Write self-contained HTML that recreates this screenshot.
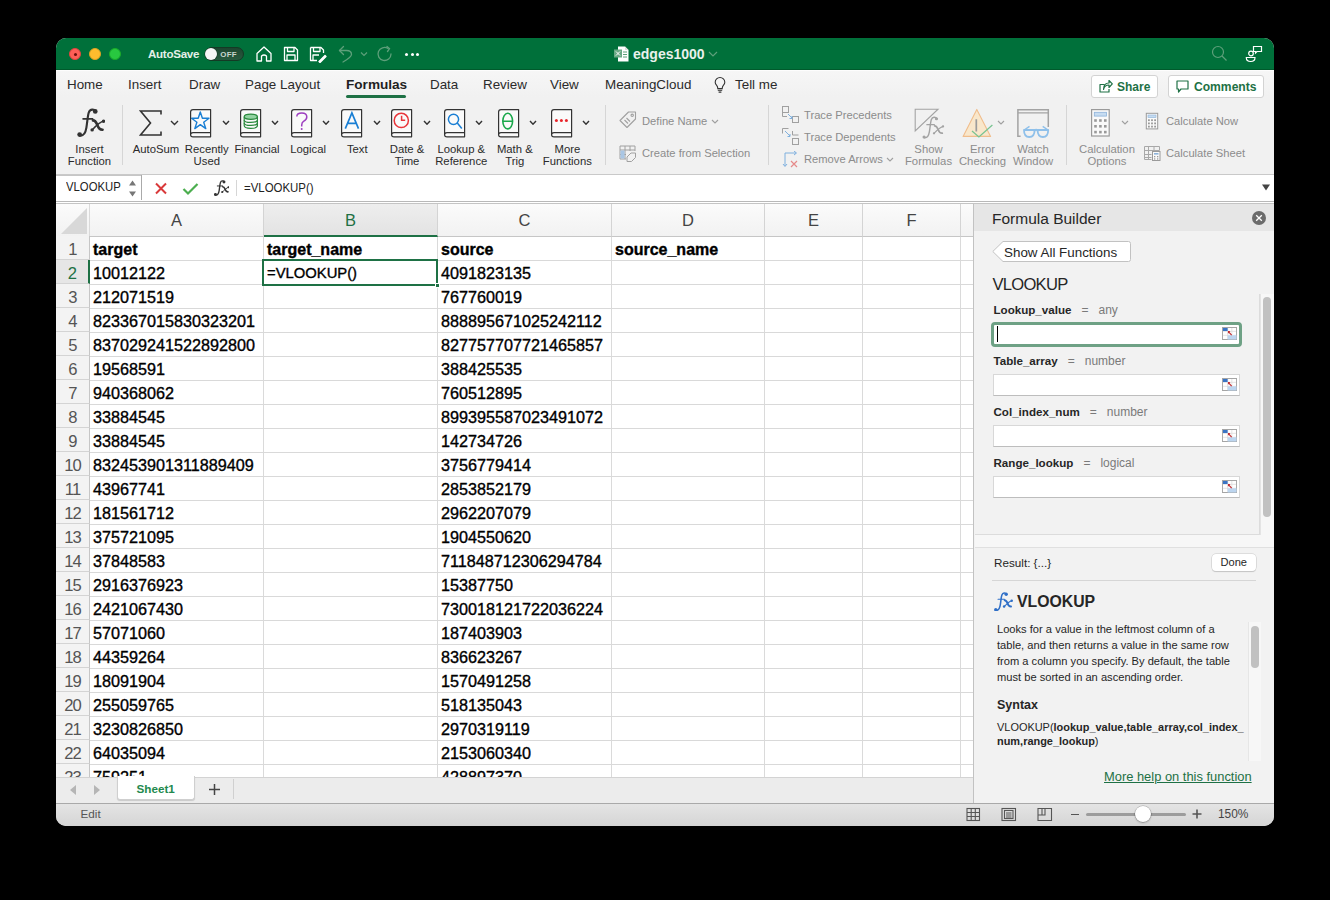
<!DOCTYPE html>
<html><head><meta charset="utf-8">
<style>
*{box-sizing:border-box;margin:0;padding:0}
html,body{width:1330px;height:900px;background:#000;overflow:hidden;font-family:"Liberation Sans",sans-serif}
#win{position:absolute;left:56px;top:38px;width:1218px;height:788px;border-radius:10px;overflow:hidden;background:#f1f1f1}
#in{position:absolute;left:-56px;top:-38px;width:1330px;height:900px}
#in div,#in svg,#in span.ab{position:absolute}
.t{white-space:nowrap;line-height:1}
/* title */
#title{left:56px;top:38px;width:1218px;height:32px;background:#00703a}
/* tabs */
.tab{top:78px;font-size:13.4px;color:#2b2b2b}
/* ribbon */
.lbl{font-size:11.3px;color:#2b2b2b;text-align:center;line-height:12.4px;white-space:nowrap}
.sm{font-size:11.2px;color:#8c8c8c;white-space:nowrap;line-height:1}
.sep{width:1px;background:#d6d6d6}
/* grid */
.vl{top:204px;width:1px;height:573px;background:#dadada}
.hl{left:56px;width:917px;height:1px;background:#d9d9d9}
.ch{top:204px;height:33px;font-size:16.5px;color:#444;text-align:center;line-height:33px;padding-left:0px;background:linear-gradient(#fbfbfb,#f2f2f2);border-right:1px solid #d4d4d4;border-bottom:1px solid #c6c6c6}
.ch.sel{background:linear-gradient(#eeeeee,#e3e3e3);color:#1e7145;border-bottom:2px solid #1e7145}
.rh{left:56px;width:34px;height:24px;font-size:16.6px;color:#555;text-align:center;line-height:28px;padding-left:0px;letter-spacing:-0.9px;background:#f3f3f3;border-bottom:1px solid #d4d4d4;border-right:1px solid #c6c6c6}
.rh.sel{background:#e6e6e6;color:#1e7145;border-right:2px solid #1e7145}
.c{font-size:16.2px;color:#000;line-height:27px;height:24px;white-space:nowrap;-webkit-text-stroke:0.35px #000}
.c.b{font-weight:bold;font-size:16px}
/* panel */
.pl{font-size:11.6px;font-weight:bold;color:#262626;line-height:1}
.pe{font-size:12px;color:#7a7a7a;line-height:1}
.inp{left:993px;width:247px;height:22px;background:#fff;border:1px solid #cfcfcf;border-radius:2px}
</style></head><body>
<div id="win"><div id="in">
<!-- TITLE BAR -->
<div id="title"></div>
<div style="left:56px;top:69px;width:1218px;height:1px;background:#005a2c"></div>
<div style="left:69px;top:48px;width:12px;height:12px;border-radius:50%;background:#fe5f57;border:0.5px solid #e0443e"></div>
<div style="left:73.5px;top:52.5px;width:3.5px;height:3.5px;border-radius:50%;background:#6e0f0b"></div>
<div style="left:89px;top:48px;width:12px;height:12px;border-radius:50%;background:#febc2e;border:0.5px solid #dea123"></div>
<div style="left:109px;top:48px;width:12px;height:12px;border-radius:50%;background:#28c840;border:0.5px solid #1aab29"></div>
<div class="t" style="left:148px;top:48px;font-size:11.6px;font-weight:bold;color:#e4efe8;letter-spacing:-0.3px">AutoSave</div>
<div style="left:204.5px;top:47px;width:39.5px;height:14px;border-radius:7px;background:linear-gradient(#1d4630,#285a3f);border:0.8px solid #143a25"></div>
<div style="left:204.8px;top:47.5px;width:12.6px;height:12.6px;border-radius:50%;background:#f6f6f6;box-shadow:0 0 0 0.6px #143a25"></div>
<div class="t" style="left:220.3px;top:50.8px;font-size:7.9px;font-weight:bold;color:#c9d6ce;letter-spacing:0.2px">OFF</div>
<!-- home -->
<svg style="left:255px;top:45px" width="18" height="18" viewBox="0 0 18 18" fill="none" stroke="#fff" stroke-width="1.3" stroke-linejoin="round"><path d="M2 8.5 L9 2 L16 8.5 V16 H11.5 V11 Q9 9 6.5 11 V16 H2 Z"/></svg>
<!-- save -->
<svg style="left:283px;top:46px" width="16" height="16" viewBox="0 0 16 16" fill="none" stroke="#fff" stroke-width="1.3" stroke-linejoin="round"><path d="M1.5 1.5 H12 L14.5 4 V14.5 H1.5 Z"/><path d="M4.5 1.5 V5.5 H11 V1.5"/><path d="M4 14.5 V9 H12 V14.5"/></svg>
<!-- save as -->
<svg style="left:309px;top:46px" width="18" height="17" viewBox="0 0 18 17" fill="none" stroke="#fff" stroke-width="1.3" stroke-linejoin="round"><path d="M1.5 1.5 H12 L14.5 4 V7 M8 14.5 H1.5 V1.5"/><path d="M4.5 1.5 V5.5 H11 V1.5"/><path d="M4 14.5 V9 H10"/><path d="M10 15.5 L16 9.5 L17 10.5 L11 16.5 Z" fill="#fff"/></svg>
<!-- undo -->
<svg style="left:338px;top:45px" width="16" height="18" viewBox="0 0 16 18" fill="none" stroke="#5d9f7a" stroke-width="1.3" stroke-linecap="round" stroke-linejoin="round"><path d="M5.5 1.5 L1.5 5.5 L5.5 9.5"/><path d="M1.5 5.5 H8.5 Q13.5 5.5 13.5 9.5 Q13.5 12 5 17"/></svg>
<svg style="left:360px;top:51px" width="8" height="6" viewBox="0 0 8 6" fill="none" stroke="#5d9f7a" stroke-width="1.2"><path d="M1 1.5 L4 4.5 L7 1.5"/></svg>
<!-- redo -->
<svg style="left:376px;top:45px" width="18" height="18" viewBox="0 0 18 18" fill="none" stroke="#5d9f7a" stroke-width="1.3" stroke-linecap="round"><path d="M15 9 A6.5 6.5 0 1 1 12 3.5"/><path d="M11 1.5 L13.5 3.7 L11.5 6.5"/></svg>
<!-- more -->
<div style="left:405px;top:53px;width:3px;height:3px;border-radius:50%;background:#fff"></div>
<div style="left:410.5px;top:53px;width:3px;height:3px;border-radius:50%;background:#fff"></div>
<div style="left:416px;top:53px;width:3px;height:3px;border-radius:50%;background:#fff"></div>
<!-- doc title -->
<svg style="left:614px;top:46px" width="15" height="16" viewBox="0 0 15 16"><path d="M4 0.5 H11 L14.5 4 V15.5 H4 Z" fill="#fff"/><path d="M11 0.5 V4 H14.5" fill="#ddd"/><rect x="0" y="3.5" width="8" height="8" fill="#6aa985"/><path d="M2 5.5 L6 9.5 M6 5.5 L2 9.5" stroke="#fff" stroke-width="1"/><path d="M9 6 H13 M9 8.5 H13 M9 11 H13" stroke="#5da07a" stroke-width="1"/></svg>
<div class="t" style="left:633px;top:47px;font-size:14px;font-weight:bold;color:#e9f1ec">edges1000</div>
<svg style="left:708px;top:51px" width="10" height="6" viewBox="0 0 10 6" fill="none" stroke="#5d9f7a" stroke-width="1.2"><path d="M1 1 L5 5 L9 1"/></svg>
<!-- search -->
<svg style="left:1211px;top:45px" width="17" height="17" viewBox="0 0 17 17" fill="none" stroke="#5d9f7a" stroke-width="1.2"><circle cx="7" cy="7" r="5.5"/><path d="M11 11 L15.5 15.5"/></svg>
<!-- collab -->
<svg style="left:1245px;top:45px" width="18" height="18" viewBox="0 0 18 18" fill="none" stroke="#fff" stroke-width="1.2"><circle cx="6" cy="8.5" r="2.3"/><path d="M1.3 12.5 H10 Q10 16.5 5.7 16.5 Q1.3 16.5 1.3 12.5 Z"/><path d="M8.5 1.5 H16.5 V6.5 H12 L10.5 8 V6.5 H8.5 Z"/></svg>

<!-- TABS -->
<div style="left:56px;top:71px;width:1218px;height:26px;background:linear-gradient(#f6f6f6,#f1f1f1)"></div>
<div style="left:56px;top:70px;width:1218px;height:1px;background:#fdfdfd"></div>
<div class="t tab" style="left:67px">Home</div>
<div class="t tab" style="left:128px">Insert</div>
<div class="t tab" style="left:189px">Draw</div>
<div class="t tab" style="left:245px">Page Layout</div>
<div class="t tab" style="left:346px;font-weight:bold;font-size:13.6px;color:#1f1f1f">Formulas</div>
<div style="left:346px;top:95px;width:60px;height:3px;border-radius:1.5px;background:#1e7145"></div>
<div class="t tab" style="left:430px">Data</div>
<div class="t tab" style="left:483px">Review</div>
<div class="t tab" style="left:550px">View</div>
<div class="t tab" style="left:605px">MeaningCloud</div>
<svg style="left:713px;top:76px" width="14" height="18" viewBox="713 75 14 18" fill="none" stroke="#333" stroke-width="1.1"><path d="M717.8 87.6 Q717.8 85.6 716.5 84.2 Q715.2 82.8 715.2 81.3 A4.8 4.8 0 0 1 724.8 81.3 Q724.8 82.8 723.5 84.2 Q722.2 85.6 722.2 87.6 Z"/><path d="M717.8 89.3 H722.2" stroke-width="1"/><path d="M718.6 91.1 H721.4" stroke-width="1.2"/></svg>
<div class="t tab" style="left:735px">Tell me</div>
<!-- share/comments -->
<div style="left:1091px;top:74.5px;width:67px;height:23.5px;background:#fff;border:1px solid #d3d3d3;border-radius:3px"></div>
<svg style="left:1099px;top:80px" width="14" height="13" viewBox="0 0 14 13" fill="none" stroke="#1e7145" stroke-width="1.2" stroke-linejoin="round"><path d="M5.5 4.5 H1 V12 H10 V9"/><path d="M4.5 9.5 Q5.5 5 10 5 V7.5 L13.3 3.8 L10 0.5 V3 Q4.5 3 4.5 9.5 Z"/></svg>
<div class="t" style="left:1117px;top:80.5px;font-size:12px;font-weight:bold;color:#1e7145">Share</div>
<div style="left:1168px;top:74.5px;width:96px;height:23.5px;background:#fff;border:1px solid #d3d3d3;border-radius:3px"></div>
<svg style="left:1176px;top:80px" width="13" height="14" viewBox="0 0 13 14" fill="none" stroke="#1e7145" stroke-width="1.2" stroke-linejoin="round"><path d="M1 1 H12 V9 H5 L2.5 12 V9 H1 Z"/></svg>
<div class="t" style="left:1194px;top:80.5px;font-size:12.1px;font-weight:bold;color:#1e7145">Comments</div>

<!-- RIBBON -->
<div style="left:56px;top:174px;width:1218px;height:1px;background:#c9c9c9"></div>
<!-- Insert function -->
<svg style="left:76.52px;top:107.92px" width="28.62" height="29.17" viewBox="290 180 520 530" fill="none" stroke="#333" stroke-linecap="round"><path d="M630 240 C600 195, 530 195, 505 260 C485 310, 480 420, 460 540 C445 630, 420 690, 345 680" stroke-width="39.0"/><circle cx="622" cy="243" r="42.9" fill="#333" stroke="none"/><circle cx="338" cy="662" r="42.9" fill="#333" stroke="none"/><path d="M400 378 H575" stroke-width="28.6"/><path d="M580 405 C625 405, 640 440, 660 490 C680 545, 700 580, 755 575" stroke-width="46.800000000000004"/><path d="M780 418 C720 430, 625 515, 565 580" stroke-width="28.6"/><circle cx="772" cy="420" r="31.200000000000003" fill="#333" stroke="none"/><circle cx="565" cy="578" r="31.200000000000003" fill="#333" stroke="none"/></svg>
<div class="lbl" style="left:59px;top:143px;width:61px">Insert<br>Function</div>
<div class="sep" style="left:122px;top:105px;height:60px"></div>
<!-- AutoSum -->
<svg style="left:139px;top:110px" width="23" height="26" viewBox="0 0 23 26" fill="none" stroke="#333" stroke-width="1.6"><path d="M22 4.5 V1 H1.5 L11.5 13 L1.5 25 H22 V21.5"/></svg>
<svg class="chev" style="left:170px;top:120px" width="9" height="6" viewBox="0 0 9 6" fill="none" stroke="#333" stroke-width="1.4"><path d="M1 1 L4.5 4.5 L8 1"/></svg>
<div class="lbl" style="left:126px;top:143px;width:60px">AutoSum</div>
<svg style="left:189.2px;top:108px" width="23" height="30" viewBox="-1 -1 23 30"><path d="M0.6 3 Q0.6 0.6 3 0.6 H20.6 V27.8 H3 Q0.6 27.8 0.6 25.7 Z" fill="#fafafa"/><path d="M0.6 25.7 Q0.6 23.6 3 23.6 H20.6" fill="#fff"/><path d="M10.3 3 L12.4 9.3 H19 L13.7 13.2 L15.8 19.6 L10.3 15.6 L4.8 19.6 L6.9 13.2 L1.6 9.3 H8.2 Z" fill="none" stroke="#1a7fd4" stroke-width="1.4" stroke-linejoin="round"/><path d="M0.6 3 Q0.6 0.6 3 0.6 H20.6 V27.8 H3 Q0.6 27.8 0.6 25.7 Z M0.6 25.7 Q0.6 23.6 3 23.6 H20.6" fill="none" stroke="#333" stroke-width="1.2" stroke-linejoin="round"/></svg>
<svg style="left:221.5px;top:120px" width="8" height="6" viewBox="0 0 8 6" fill="none" stroke="#333" stroke-width="1.4"><path d="M1 1 L4 4.3 L7 1"/></svg>
<div class="lbl" style="left:166.8px;top:143px;width:80px">Recently<br>Used</div>
<svg style="left:239.2px;top:108px" width="23" height="30" viewBox="-1 -1 23 30"><path d="M0.6 3 Q0.6 0.6 3 0.6 H20.6 V27.8 H3 Q0.6 27.8 0.6 25.7 Z" fill="#fafafa"/><path d="M0.6 25.7 Q0.6 23.6 3 23.6 H20.6" fill="#fff"/><g stroke="#2b8a3e" stroke-width="1.2"><ellipse cx="10.8" cy="7.7" rx="6.6" ry="2.6" fill="#93d3a2"/><path d="M4.2 7.7 V16.6 Q4.2 19.4 10.8 19.4 Q17.4 19.4 17.4 16.6 V7.7" fill="none"/><path d="M4.2 10.9 Q4.2 13.4 10.8 13.4 Q17.4 13.4 17.4 10.9 M4.2 13.9 Q4.2 16.4 10.8 16.4 Q17.4 16.4 17.4 13.9" fill="none"/></g><path d="M0.6 3 Q0.6 0.6 3 0.6 H20.6 V27.8 H3 Q0.6 27.8 0.6 25.7 Z M0.6 25.7 Q0.6 23.6 3 23.6 H20.6" fill="none" stroke="#333" stroke-width="1.2" stroke-linejoin="round"/></svg>
<svg style="left:270.5px;top:120px" width="8" height="6" viewBox="0 0 8 6" fill="none" stroke="#333" stroke-width="1.4"><path d="M1 1 L4 4.3 L7 1"/></svg>
<div class="lbl" style="left:217.0px;top:143px;width:80px">Financial</div>
<svg style="left:289.6px;top:108px" width="23" height="30" viewBox="-1 -1 23 30"><path d="M0.6 3 Q0.6 0.6 3 0.6 H20.6 V27.8 H3 Q0.6 27.8 0.6 25.7 Z" fill="#fafafa"/><path d="M0.6 25.7 Q0.6 23.6 3 23.6 H20.6" fill="#fff"/><path d="M5.8 7.5 Q5.8 4 10.8 4 Q15.8 4 15.8 8 Q15.8 10.5 12.5 12.3 Q10.7 13.3 10.7 16.3 V17.5" fill="none" stroke="#9d3fc0" stroke-width="1.5"/><circle cx="10.7" cy="20" r="1" fill="#9d3fc0"/><path d="M0.6 3 Q0.6 0.6 3 0.6 H20.6 V27.8 H3 Q0.6 27.8 0.6 25.7 Z M0.6 25.7 Q0.6 23.6 3 23.6 H20.6" fill="none" stroke="#333" stroke-width="1.2" stroke-linejoin="round"/></svg>
<svg style="left:321.5px;top:120px" width="8" height="6" viewBox="0 0 8 6" fill="none" stroke="#333" stroke-width="1.4"><path d="M1 1 L4 4.3 L7 1"/></svg>
<div class="lbl" style="left:268.1px;top:143px;width:80px">Logical</div>
<svg style="left:340px;top:108px" width="23" height="30" viewBox="-1 -1 23 30"><path d="M0.6 3 Q0.6 0.6 3 0.6 H20.6 V27.8 H3 Q0.6 27.8 0.6 25.7 Z" fill="#fafafa"/><path d="M0.6 25.7 Q0.6 23.6 3 23.6 H20.6" fill="#fff"/><path d="M4.3 19.7 L10.9 4 L17.5 19.7 M6.6 14.3 H15.2" fill="none" stroke="#1a7fd4" stroke-width="1.7"/><path d="M0.6 3 Q0.6 0.6 3 0.6 H20.6 V27.8 H3 Q0.6 27.8 0.6 25.7 Z M0.6 25.7 Q0.6 23.6 3 23.6 H20.6" fill="none" stroke="#333" stroke-width="1.2" stroke-linejoin="round"/></svg>
<svg style="left:372.5px;top:120px" width="8" height="6" viewBox="0 0 8 6" fill="none" stroke="#333" stroke-width="1.4"><path d="M1 1 L4 4.3 L7 1"/></svg>
<div class="lbl" style="left:317.3px;top:143px;width:80px">Text</div>
<svg style="left:390.3px;top:108px" width="23" height="30" viewBox="-1 -1 23 30"><path d="M0.6 3 Q0.6 0.6 3 0.6 H20.6 V27.8 H3 Q0.6 27.8 0.6 25.7 Z" fill="#fafafa"/><path d="M0.6 25.7 Q0.6 23.6 3 23.6 H20.6" fill="#fff"/><circle cx="10.3" cy="11.4" r="7.1" fill="none" stroke="#e8363b" stroke-width="1.5"/><path d="M10.6 6.8 V11.3 H14.2" fill="none" stroke="#e8363b" stroke-width="1.5"/><path d="M0.6 3 Q0.6 0.6 3 0.6 H20.6 V27.8 H3 Q0.6 27.8 0.6 25.7 Z M0.6 25.7 Q0.6 23.6 3 23.6 H20.6" fill="none" stroke="#333" stroke-width="1.2" stroke-linejoin="round"/></svg>
<svg style="left:422.5px;top:120px" width="8" height="6" viewBox="0 0 8 6" fill="none" stroke="#333" stroke-width="1.4"><path d="M1 1 L4 4.3 L7 1"/></svg>
<div class="lbl" style="left:367.05px;top:143px;width:80px">Date &amp;<br>Time</div>
<svg style="left:443.2px;top:108px" width="23" height="30" viewBox="-1 -1 23 30"><path d="M0.6 3 Q0.6 0.6 3 0.6 H20.6 V27.8 H3 Q0.6 27.8 0.6 25.7 Z" fill="#fafafa"/><path d="M0.6 25.7 Q0.6 23.6 3 23.6 H20.6" fill="#fff"/><circle cx="9.5" cy="10.3" r="5.1" fill="none" stroke="#1a7fd4" stroke-width="1.5"/><path d="M13.3 14.1 L17.8 19.4" stroke="#1a7fd4" stroke-width="1.6"/><path d="M0.6 3 Q0.6 0.6 3 0.6 H20.6 V27.8 H3 Q0.6 27.8 0.6 25.7 Z M0.6 25.7 Q0.6 23.6 3 23.6 H20.6" fill="none" stroke="#333" stroke-width="1.2" stroke-linejoin="round"/></svg>
<svg style="left:475.0px;top:120px" width="8" height="6" viewBox="0 0 8 6" fill="none" stroke="#333" stroke-width="1.4"><path d="M1 1 L4 4.3 L7 1"/></svg>
<div class="lbl" style="left:421.25px;top:143px;width:80px">Lookup &amp;<br>Reference</div>
<svg style="left:497.4px;top:108px" width="23" height="30" viewBox="-1 -1 23 30"><path d="M0.6 3 Q0.6 0.6 3 0.6 H20.6 V27.8 H3 Q0.6 27.8 0.6 25.7 Z" fill="#fafafa"/><path d="M0.6 25.7 Q0.6 23.6 3 23.6 H20.6" fill="#fff"/><ellipse cx="9.7" cy="12.1" rx="4.9" ry="7.8" fill="none" stroke="#1aa84b" stroke-width="1.6"/><path d="M4.7 12.2 H14.7" stroke="#1aa84b" stroke-width="1.6"/><path d="M0.6 3 Q0.6 0.6 3 0.6 H20.6 V27.8 H3 Q0.6 27.8 0.6 25.7 Z M0.6 25.7 Q0.6 23.6 3 23.6 H20.6" fill="none" stroke="#333" stroke-width="1.2" stroke-linejoin="round"/></svg>
<svg style="left:529.1px;top:120px" width="8" height="6" viewBox="0 0 8 6" fill="none" stroke="#333" stroke-width="1.4"><path d="M1 1 L4 4.3 L7 1"/></svg>
<div class="lbl" style="left:474.79999999999995px;top:143px;width:80px">Math &amp;<br>Trig</div>
<svg style="left:550.2px;top:108px" width="23" height="30" viewBox="-1 -1 23 30"><path d="M0.6 3 Q0.6 0.6 3 0.6 H20.6 V27.8 H3 Q0.6 27.8 0.6 25.7 Z" fill="#fafafa"/><path d="M0.6 25.7 Q0.6 23.6 3 23.6 H20.6" fill="#fff"/><g fill="#e8262c"><circle cx="5.4" cy="11.4" r="1.5"/><circle cx="10.4" cy="11.4" r="1.5"/><circle cx="15.4" cy="11.4" r="1.5"/></g><path d="M0.6 3 Q0.6 0.6 3 0.6 H20.6 V27.8 H3 Q0.6 27.8 0.6 25.7 Z M0.6 25.7 Q0.6 23.6 3 23.6 H20.6" fill="none" stroke="#333" stroke-width="1.2" stroke-linejoin="round"/></svg>
<svg style="left:582.1px;top:120px" width="8" height="6" viewBox="0 0 8 6" fill="none" stroke="#333" stroke-width="1.4"><path d="M1 1 L4 4.3 L7 1"/></svg>
<div class="lbl" style="left:527.35px;top:143px;width:80px">More<br>Functions</div>
<div class="sep" style="left:605px;top:105px;height:60px"></div>
<!-- Define name -->
<svg style="left:619px;top:111px" width="18" height="18" viewBox="0 0 18 18" fill="none" stroke="#a0a0a0" stroke-width="1.1" stroke-linejoin="round"><path d="M1 9.5 L9.5 1 H16.5 V8 L8 16.5 Z"/><circle cx="13.2" cy="4.3" r="1.2"/><path d="M5.5 9 L9 12.5 M7.5 7 L11 10.5"/></svg>
<div class="sm" style="left:642px;top:116px">Define Name</div>
<svg style="left:711px;top:119px" width="8" height="5" viewBox="0 0 8 5" fill="none" stroke="#a0a0a0" stroke-width="1.1"><path d="M1 1 L4 4 L7 1"/></svg>
<svg style="left:619px;top:145px" width="18" height="17" viewBox="0 0 18 17" fill="none" stroke="#a0a0a0" stroke-width="1"><path d="M1 1 H16 V6 M1 1 V14 H7 M1 5 H16 M1 9.5 H7 M6 1 V14 M11 1 V6"/><rect x="1.5" y="5.5" width="4" height="8" fill="#a9c6e4" stroke="none"/><path d="M8 12 L12 8 H16.5 V12.5 L12.5 16.5 H8 Z" fill="#f1f1f1"/></svg>
<div class="sm" style="left:642px;top:148px">Create from Selection</div>
<div class="sep" style="left:768px;top:105px;height:60px"></div>
<!-- trace -->
<svg style="left:782px;top:106px" width="17" height="17" viewBox="0 0 17 17" fill="none" stroke="#a0a0a0" stroke-width="1"><rect x="0.5" y="0.5" width="6" height="6"/><path d="M0.5 6.5 V10.5 H5"/><rect x="10.5" y="10.5" width="6" height="6"/><path d="M6 8 L10 12" stroke="#7fb0de"/><path d="M7.5 12.5 H10 V10" stroke="#7fb0de"/></svg>
<div class="sm" style="left:804px;top:110px">Trace Precedents</div>
<svg style="left:782px;top:128px" width="17" height="17" viewBox="0 0 17 17" fill="none" stroke="#a0a0a0" stroke-width="1"><path d="M0.5 5.5 V0.5 H6.5"/><rect x="10.5" y="10.5" width="6" height="6"/><path d="M10.5 3 V7 H16.5"/><path d="M3 3 L8 8" stroke="#7fb0de"/><path d="M5.5 8.5 H8 V6" stroke="#7fb0de"/></svg>
<div class="sm" style="left:804px;top:132px">Trace Dependents</div>
<svg style="left:782px;top:151px" width="17" height="17" viewBox="0 0 17 17" fill="none" stroke-width="1"><path d="M3 15 V2 H14" stroke="#7fb0de"/><path d="M1 13 L3 15.5 L5 13 M12 0 L14.5 2 L12 4" stroke="#7fb0de"/><path d="M9 10 L15 16 M15 10 L9 16" stroke="#e58a8a" stroke-width="1.2"/></svg>
<div class="sm" style="left:804px;top:154px">Remove Arrows</div>
<svg style="left:886px;top:157px" width="8" height="5" viewBox="0 0 8 5" fill="none" stroke="#a0a0a0" stroke-width="1.1"><path d="M1 1 L4 4 L7 1"/></svg>
<!-- show formulas -->
<svg style="left:914px;top:108px" width="26" height="25" viewBox="0 0 26 25" fill="none" stroke="#a3a3a3" stroke-width="1.1"><path d="M1.2 23 V1.2 H24 Z"/></svg><svg style="left:922.30px;top:115.54px" width="22.68" height="23.11" viewBox="290 180 520 530" fill="none" stroke="#a3a3a3" stroke-linecap="round"><path d="M630 240 C600 195, 530 195, 505 260 C485 310, 480 420, 460 540 C445 630, 420 690, 345 680" stroke-width="33.0"/><circle cx="622" cy="243" r="36.300000000000004" fill="#a3a3a3" stroke="none"/><circle cx="338" cy="662" r="36.300000000000004" fill="#a3a3a3" stroke="none"/><path d="M400 378 H575" stroke-width="24.200000000000003"/><path d="M580 405 C625 405, 640 440, 660 490 C680 545, 700 580, 755 575" stroke-width="39.6"/><path d="M780 418 C720 430, 625 515, 565 580" stroke-width="24.200000000000003"/><circle cx="772" cy="420" r="26.400000000000002" fill="#a3a3a3" stroke="none"/><circle cx="565" cy="578" r="26.400000000000002" fill="#a3a3a3" stroke="none"/></svg>
<div class="lbl" style="left:900px;top:143px;width:57px;color:#8c8c8c">Show<br>Formulas</div>
<!-- error checking -->
<svg style="left:960px;top:107px" width="36" height="33" viewBox="960 107 36 33"><path d="M976.8 109.4 L990.6 136.4 H963.1 Z" fill="#f9e7cb" stroke="#f0bd8c" stroke-width="1.1" stroke-linejoin="round"/><path d="M976.3 119.2 V131.5" stroke="#9c9c9c" stroke-width="1.7"/><path d="M972 131 L978.9 137 L992.4 124.9" fill="none" stroke="#79c492" stroke-width="1.3"/></svg>
<svg style="left:997px;top:120px" width="8" height="5" viewBox="0 0 8 5" fill="none" stroke="#a0a0a0" stroke-width="1.1"><path d="M1 1 L4 4 L7 1"/></svg>
<div class="lbl" style="left:955px;top:143px;width:55px;color:#8c8c8c">Error<br>Checking</div>
<!-- watch window -->
<svg style="left:1016px;top:107px" width="36" height="33" viewBox="1016 107 36 33" fill="none"><path d="M1017.9 137 V109.8 H1048.3 V127" stroke="#a3a3a3" stroke-width="1.5"/><path d="M1017.9 112.9 H1048.3" stroke="#a3a3a3" stroke-width="1.1"/><path d="M1017.9 136.3 H1020.6" stroke="#a3a3a3" stroke-width="1.4"/><g stroke="#8fc0ea" stroke-width="1.8" stroke-linejoin="round"><path d="M1024 130 H1034.6 Q1034.6 137 1029.3 137 Q1024 137 1024 130 Z"/><path d="M1037.6 130 H1048.2 Q1048.2 137 1042.9 137 Q1037.6 137 1037.6 130 Z"/><path d="M1034.6 130.5 Q1036.1 129 1037.6 130.5"/><path d="M1024.2 130 L1029.5 126.3 M1048 130 L1042.7 126.3" stroke-width="1.5"/></g></svg>
<div class="lbl" style="left:1008px;top:143px;width:50px;color:#8c8c8c">Watch<br>Window</div>
<div class="sep" style="left:1066px;top:105px;height:60px"></div>
<!-- calc options -->
<svg style="left:1090px;top:108px" width="21" height="30" viewBox="1090 108 21 30"><rect x="1091.6" y="109.6" width="17.6" height="26.4" fill="#fafafa" stroke="#9a9a9a" stroke-width="1.2"/><rect x="1094.3" y="112.3" width="12.2" height="3.8" fill="#c6dcf1" stroke="#8db3da" stroke-width="0.8"/><g fill="#999"><rect x="1094.2" y="119.2" width="2.6" height="2.6"/><rect x="1099.1" y="119.2" width="2.6" height="2.6"/><rect x="1104" y="119.2" width="2.6" height="2.6"/><rect x="1094.2" y="125" width="2.6" height="2.6"/><rect x="1099.1" y="125" width="2.6" height="2.6"/><rect x="1104" y="125" width="2.6" height="2.6"/><rect x="1094.2" y="130.8" width="2.6" height="2.6"/><rect x="1099.1" y="130.8" width="2.6" height="2.6"/><rect x="1104" y="130.8" width="2.6" height="2.6"/></g></svg>
<svg style="left:1121px;top:120px" width="8" height="5" viewBox="0 0 8 5" fill="none" stroke="#a0a0a0" stroke-width="1.1"><path d="M1 1 L4 4 L7 1"/></svg>
<div class="lbl" style="left:1075px;top:143px;width:64px;color:#8c8c8c">Calculation<br>Options</div>
<svg style="left:1145px;top:112px" width="14" height="18" viewBox="1145 112 14 18"><rect x="1146.3" y="113.3" width="11.4" height="15.6" fill="#fafafa" stroke="#9a9a9a" stroke-width="1"/><rect x="1148" y="115" width="8" height="2.6" fill="#c6dcf1" stroke="#8db3da" stroke-width="0.6"/><g fill="#999"><rect x="1148" y="119.3" width="1.8" height="1.8"/><rect x="1151.1" y="119.3" width="1.8" height="1.8"/><rect x="1154.2" y="119.3" width="1.8" height="1.8"/><rect x="1148" y="122.5" width="1.8" height="1.8"/><rect x="1151.1" y="122.5" width="1.8" height="1.8"/><rect x="1154.2" y="122.5" width="1.8" height="1.8"/><rect x="1148" y="125.7" width="1.8" height="1.8"/><rect x="1151.1" y="125.7" width="1.8" height="1.8"/><rect x="1154.2" y="125.7" width="1.8" height="1.8"/></g></svg>
<div class="sm" style="left:1166px;top:116px">Calculate Now</div>
<svg style="left:1143px;top:145px" width="18" height="17" viewBox="1143 145 18 17" fill="none"><path d="M1144.5 146.5 H1159.5 V150.5 M1144.5 146.5 V159.5 H1151.5 M1144.5 150.5 H1159.5 M1144.5 154.5 H1151.5 M1144.5 157.5 H1151.5 M1148.5 146.5 V159.5 M1154 146.5 V150.5" stroke="#a8a8a8" stroke-width="1"/><rect x="1152.5" y="151.5" width="7.5" height="9" fill="#fafafa" stroke="#9a9a9a" stroke-width="1"/><rect x="1154" y="153" width="4.5" height="1.6" fill="#8db3da"/><g fill="#9a9a9a"><rect x="1154" y="156" width="1.3" height="1.3"/><rect x="1157" y="156" width="1.3" height="1.3"/><rect x="1154" y="158.3" width="1.3" height="1.3"/><rect x="1157" y="158.3" width="1.3" height="1.3"/></g></svg>
<div class="sm" style="left:1166px;top:148px">Calculate Sheet</div>

<!-- FORMULA BAR -->
<div style="left:56px;top:175px;width:1218px;height:27px;background:#fff"></div>
<div style="left:56px;top:175px;width:86px;height:1px;background:#c6c6c6"></div>
<div style="left:140.5px;top:175px;width:1.5px;height:25px;background:#aaaaaa"></div>
<div style="left:56px;top:201px;width:1218px;height:1px;background:#b8b8b8"></div>
<div style="left:56px;top:202px;width:1218px;height:1px;background:#fff"></div>
<div style="left:56px;top:203px;width:1218px;height:1px;background:#c4c4c4"></div>
<div class="t" style="left:66px;top:180px;font-size:13px;color:#222;transform:scaleX(0.87);transform-origin:0 0">VLOOKUP</div>
<svg style="left:128px;top:179px" width="9" height="19" viewBox="0 0 9 19" fill="#777"><path d="M4.5 1.5 L8 6.5 H1 Z M4.5 17.5 L8 12.5 H1 Z"/></svg>
<svg style="left:154px;top:182px" width="14" height="13" viewBox="0 0 14 13" fill="none" stroke="#d9393a" stroke-width="2"><path d="M2 1.5 L12 11.5 M12 1.5 L2 11.5"/></svg>
<svg style="left:182px;top:182px" width="17" height="14" viewBox="0 0 17 14" fill="none" stroke="#4cae4f" stroke-width="2.2"><path d="M1.5 7 L6 11.5 L15.5 2"/></svg>
<svg style="left:213.72px;top:180.41px" width="15.64" height="15.94" viewBox="290 180 520 530" fill="none" stroke="#333" stroke-linecap="round"><path d="M630 240 C600 195, 530 195, 505 260 C485 310, 480 420, 460 540 C445 630, 420 690, 345 680" stroke-width="45.0"/><circle cx="622" cy="243" r="49.5" fill="#333" stroke="none"/><circle cx="338" cy="662" r="49.5" fill="#333" stroke="none"/><path d="M400 378 H575" stroke-width="33.0"/><path d="M580 405 C625 405, 640 440, 660 490 C680 545, 700 580, 755 575" stroke-width="54.0"/><path d="M780 418 C720 430, 625 515, 565 580" stroke-width="33.0"/><circle cx="772" cy="420" r="36.0" fill="#333" stroke="none"/><circle cx="565" cy="578" r="36.0" fill="#333" stroke="none"/></svg>
<div style="left:236px;top:180px;width:1px;height:16px;background:#d6d6d6"></div>
<div class="t" style="left:244px;top:181.5px;font-size:12.5px;color:#222;transform:scaleX(0.915);transform-origin:0 0">=VLOOKUP()</div>
<svg style="left:1261px;top:183px" width="10" height="8" viewBox="0 0 10 8" fill="#444"><path d="M1 1.5 H9 L5 7.5 Z"/></svg>

<!-- GRID -->
<div style="left:56px;top:204px;width:917px;height:573px;background:#fff"></div>
<div style="left:56px;top:204px;width:34px;height:33px;background:linear-gradient(#fbfbfb,#f2f2f2);border-right:1px solid #c6c6c6;border-bottom:1px solid #c6c6c6"></div>
<svg style="left:61px;top:208px" width="26" height="26" viewBox="0 0 26 26"><path d="M26 0 V26 H0 Z" fill="#d8d8d8"/></svg>
<div class="vl" style="left:89px"></div>
<div class="vl" style="left:263px"></div>
<div class="vl" style="left:437px"></div>
<div class="vl" style="left:611px"></div>
<div class="vl" style="left:764px"></div>
<div class="vl" style="left:862px"></div>
<div class="vl" style="left:960px"></div>
<div class="hl" style="top:260px"></div>
<div class="hl" style="top:284px"></div>
<div class="hl" style="top:308px"></div>
<div class="hl" style="top:332px"></div>
<div class="hl" style="top:356px"></div>
<div class="hl" style="top:380px"></div>
<div class="hl" style="top:404px"></div>
<div class="hl" style="top:428px"></div>
<div class="hl" style="top:452px"></div>
<div class="hl" style="top:476px"></div>
<div class="hl" style="top:500px"></div>
<div class="hl" style="top:524px"></div>
<div class="hl" style="top:548px"></div>
<div class="hl" style="top:572px"></div>
<div class="hl" style="top:596px"></div>
<div class="hl" style="top:620px"></div>
<div class="hl" style="top:644px"></div>
<div class="hl" style="top:668px"></div>
<div class="hl" style="top:692px"></div>
<div class="hl" style="top:716px"></div>
<div class="hl" style="top:740px"></div>
<div class="hl" style="top:764px"></div>
<div class="hl" style="top:788px"></div>
<div class="ch" style="left:90px;width:174px">A</div>
<div class="ch sel" style="left:264px;width:174px">B</div>
<div class="ch" style="left:438px;width:174px">C</div>
<div class="ch" style="left:612px;width:153px">D</div>
<div class="ch" style="left:765px;width:98px">E</div>
<div class="ch" style="left:863px;width:98px">F</div>
<div class="ch" style="left:961px;width:98px">G</div>
<div class="rh" style="top:236px">1</div>
<div class="rh sel" style="top:260px">2</div>
<div class="rh" style="top:284px">3</div>
<div class="rh" style="top:308px">4</div>
<div class="rh" style="top:332px">5</div>
<div class="rh" style="top:356px">6</div>
<div class="rh" style="top:380px">7</div>
<div class="rh" style="top:404px">8</div>
<div class="rh" style="top:428px">9</div>
<div class="rh" style="top:452px">10</div>
<div class="rh" style="top:476px">11</div>
<div class="rh" style="top:500px">12</div>
<div class="rh" style="top:524px">13</div>
<div class="rh" style="top:548px">14</div>
<div class="rh" style="top:572px">15</div>
<div class="rh" style="top:596px">16</div>
<div class="rh" style="top:620px">17</div>
<div class="rh" style="top:644px">18</div>
<div class="rh" style="top:668px">19</div>
<div class="rh" style="top:692px">20</div>
<div class="rh" style="top:716px">21</div>
<div class="rh" style="top:740px">22</div>
<div class="rh" style="top:764px">23</div>
<div class="c b" style="left:93px;top:236px">target</div>
<div class="c b" style="left:267px;top:236px">target_name</div>
<div class="c b" style="left:441px;top:236px">source</div>
<div class="c b" style="left:615px;top:236px">source_name</div>
<div class="c" style="left:93px;top:260px">10012122</div>
<div class="c" style="left:441px;top:260px">4091823135</div>
<div class="c" style="left:93px;top:284px">212071519</div>
<div class="c" style="left:441px;top:284px">767760019</div>
<div class="c" style="left:93px;top:308px">823367015830323201</div>
<div class="c" style="left:441px;top:308px">888895671025242112</div>
<div class="c" style="left:93px;top:332px">837029241522892800</div>
<div class="c" style="left:441px;top:332px">827757707721465857</div>
<div class="c" style="left:93px;top:356px">19568591</div>
<div class="c" style="left:441px;top:356px">388425535</div>
<div class="c" style="left:93px;top:380px">940368062</div>
<div class="c" style="left:441px;top:380px">760512895</div>
<div class="c" style="left:93px;top:404px">33884545</div>
<div class="c" style="left:441px;top:404px">899395587023491072</div>
<div class="c" style="left:93px;top:428px">33884545</div>
<div class="c" style="left:441px;top:428px">142734726</div>
<div class="c" style="left:93px;top:452px">832453901311889409</div>
<div class="c" style="left:441px;top:452px">3756779414</div>
<div class="c" style="left:93px;top:476px">43967741</div>
<div class="c" style="left:441px;top:476px">2853852179</div>
<div class="c" style="left:93px;top:500px">181561712</div>
<div class="c" style="left:441px;top:500px">2962207079</div>
<div class="c" style="left:93px;top:524px">375721095</div>
<div class="c" style="left:441px;top:524px">1904550620</div>
<div class="c" style="left:93px;top:548px">37848583</div>
<div class="c" style="left:441px;top:548px">711848712306294784</div>
<div class="c" style="left:93px;top:572px">2916376923</div>
<div class="c" style="left:441px;top:572px">15387750</div>
<div class="c" style="left:93px;top:596px">2421067430</div>
<div class="c" style="left:441px;top:596px">730018121722036224</div>
<div class="c" style="left:93px;top:620px">57071060</div>
<div class="c" style="left:441px;top:620px">187403903</div>
<div class="c" style="left:93px;top:644px">44359264</div>
<div class="c" style="left:441px;top:644px">836623267</div>
<div class="c" style="left:93px;top:668px">18091904</div>
<div class="c" style="left:441px;top:668px">1570491258</div>
<div class="c" style="left:93px;top:692px">255059765</div>
<div class="c" style="left:441px;top:692px">518135043</div>
<div class="c" style="left:93px;top:716px">3230826850</div>
<div class="c" style="left:441px;top:716px">2970319119</div>
<div class="c" style="left:93px;top:740px">64035094</div>
<div class="c" style="left:441px;top:740px">2153060340</div>
<div class="c" style="left:93px;top:764px">759251</div>
<div class="c" style="left:441px;top:764px">428897370</div>
<!-- active cell -->
<div style="left:262px;top:259px;width:176px;height:27px;border:2px solid #1e7145"></div>
<div style="left:435px;top:283px;width:5px;height:5px;background:#1e7145;border:1px solid #fff"></div>
<div class="c" style="left:267px;top:260px;font-size:14.8px;line-height:26px">=VLOOKUP()</div>

<div style="left:973px;top:204px;width:301px;height:599px;background:#f2f2f2"></div>
<div style="left:973px;top:204px;width:1px;height:599px;background:#c2c2c2"></div>
<div style="left:974px;top:204px;width:300px;height:27px;background:#e6e6e6"></div>
<div class="t" style="left:992px;top:211px;font-size:15.5px;color:#262626">Formula Builder</div>
<div style="left:1252px;top:211px;width:14px;height:14px;border-radius:50%;background:#6b6b6b"></div>
<svg style="left:1252px;top:211px" width="14" height="14" viewBox="0 0 14 14" stroke="#fff" stroke-width="1.3"><path d="M4.2 4.2 L9.8 9.8 M9.8 4.2 L4.2 9.8"/></svg>
<svg style="left:992px;top:241px" width="140" height="22" viewBox="0 0 140 22"><path d="M11 0.5 H136.5 Q138.5 0.5 138.5 2.5 V18.5 Q138.5 20.5 136.5 20.5 H11 L0.8 10.5 Z" fill="#fff" stroke="#c2c2c2" stroke-width="1"/></svg>
<div class="t" style="left:1004px;top:246px;font-size:13.4px;color:#262626">Show All Functions</div>
<div class="t" style="left:992.5px;top:277px;font-size:16.6px;letter-spacing:-0.75px;color:#262626">VLOOKUP</div>
<div style="left:975px;top:294px;width:285px;height:241px;border-right:1px solid #dcdcdc;border-bottom:1px solid #dcdcdc"></div>
<div style="left:975px;top:535px;width:299px;height:13px;background:#f7f7f7;border-bottom:1px solid #e0e0e0"></div>
<div style="left:1260px;top:294px;width:14px;height:241px;background:#f7f7f7;border-left:1px solid #e4e4e4"></div>
<div style="left:1263px;top:297px;width:8px;height:220px;border-radius:4px;background:#c1c1c1"></div>
<div class="pl" style="left:993.5px;top:303.5px">Lookup_value</div>
<div class="pe" style="left:1081.453125px;top:303.5px">=</div>
<div class="pe" style="left:1098.453125px;top:303.5px">any</div>
<div style="left:991px;top:322px;width:251px;height:25px;background:#fff;border:3.5px solid #6ea185;border-radius:4px"></div>
<div style="left:997px;top:326px;width:1px;height:16px;background:#000"></div>
<svg style="left:1222px;top:327px" width="15" height="13" viewBox="0 0 16 13" preserveAspectRatio="none"><rect x="0.5" y="0.5" width="15" height="12" fill="#fff" stroke="#a5a5a5"/><path d="M1 4.3 H15 M1 8.3 H15 M6 1 V12 M10.5 1 V12" stroke="#d5d5d5" stroke-width="0.7"/><rect x="1" y="1" width="5" height="3" fill="#3a74c4"/><rect x="6" y="8.3" width="9.5" height="4.2" fill="#bcd5ef"/><path d="M6.8 4.6 L10.3 8.1" stroke="#c0282d" stroke-width="1.3"/><path d="M6.3 4.1 H9 L6.3 6.8 Z" fill="#c0282d"/></svg>
<div class="pl" style="left:993.5px;top:354.5px">Table_array</div>
<div class="pe" style="left:1067.75px;top:354.5px">=</div>
<div class="pe" style="left:1084.75px;top:354.5px">number</div>
<div style="left:993px;top:374px;width:247px;height:22px;background:#fff;border:1px solid #d8d8d8;border-bottom-color:#bdbdbd"></div>
<svg style="left:1222px;top:378px" width="15" height="13" viewBox="0 0 16 13" preserveAspectRatio="none"><rect x="0.5" y="0.5" width="15" height="12" fill="#fff" stroke="#a5a5a5"/><path d="M1 4.3 H15 M1 8.3 H15 M6 1 V12 M10.5 1 V12" stroke="#d5d5d5" stroke-width="0.7"/><rect x="1" y="1" width="5" height="3" fill="#3a74c4"/><rect x="6" y="8.3" width="9.5" height="4.2" fill="#bcd5ef"/><path d="M6.8 4.6 L10.3 8.1" stroke="#c0282d" stroke-width="1.3"/><path d="M6.3 4.1 H9 L6.3 6.8 Z" fill="#c0282d"/></svg>
<div class="pl" style="left:993.5px;top:405.5px">Col_index_num</div>
<div class="pe" style="left:1089.828125px;top:405.5px">=</div>
<div class="pe" style="left:1106.828125px;top:405.5px">number</div>
<div style="left:993px;top:425px;width:247px;height:22px;background:#fff;border:1px solid #d8d8d8;border-bottom-color:#bdbdbd"></div>
<svg style="left:1222px;top:429px" width="15" height="13" viewBox="0 0 16 13" preserveAspectRatio="none"><rect x="0.5" y="0.5" width="15" height="12" fill="#fff" stroke="#a5a5a5"/><path d="M1 4.3 H15 M1 8.3 H15 M6 1 V12 M10.5 1 V12" stroke="#d5d5d5" stroke-width="0.7"/><rect x="1" y="1" width="5" height="3" fill="#3a74c4"/><rect x="6" y="8.3" width="9.5" height="4.2" fill="#bcd5ef"/><path d="M6.8 4.6 L10.3 8.1" stroke="#c0282d" stroke-width="1.3"/><path d="M6.3 4.1 H9 L6.3 6.8 Z" fill="#c0282d"/></svg>
<div class="pl" style="left:993.5px;top:456.5px">Range_lookup</div>
<div class="pe" style="left:1083.390625px;top:456.5px">=</div>
<div class="pe" style="left:1100.390625px;top:456.5px">logical</div>
<div style="left:993px;top:476px;width:247px;height:22px;background:#fff;border:1px solid #d8d8d8;border-bottom-color:#bdbdbd"></div>
<svg style="left:1222px;top:480px" width="15" height="13" viewBox="0 0 16 13" preserveAspectRatio="none"><rect x="0.5" y="0.5" width="15" height="12" fill="#fff" stroke="#a5a5a5"/><path d="M1 4.3 H15 M1 8.3 H15 M6 1 V12 M10.5 1 V12" stroke="#d5d5d5" stroke-width="0.7"/><rect x="1" y="1" width="5" height="3" fill="#3a74c4"/><rect x="6" y="8.3" width="9.5" height="4.2" fill="#bcd5ef"/><path d="M6.8 4.6 L10.3 8.1" stroke="#c0282d" stroke-width="1.3"/><path d="M6.3 4.1 H9 L6.3 6.8 Z" fill="#c0282d"/></svg>
<div class="t" style="left:994px;top:557px;font-size:11.7px;color:#262626">Result: {...}</div>
<div style="left:1211.5px;top:553.5px;width:44.5px;height:17px;background:#fff;border-radius:4px;box-shadow:0 0 0 0.5px #c8c8c8,0 1px 1px rgba(0,0,0,.2)"></div>
<div class="t" style="left:1220.5px;top:557px;font-size:11.1px;color:#262626">Done</div>
<div style="left:992px;top:580px;width:264px;height:1px;background:#d6d6d6"></div>
<svg style="left:994.41px;top:591.78px" width="19.08" height="19.45" viewBox="290 180 520 530" fill="none" stroke="#2f6fc7" stroke-linecap="round"><path d="M630 240 C600 195, 530 195, 505 260 C485 310, 480 420, 460 540 C445 630, 420 690, 345 680" stroke-width="42.0"/><circle cx="622" cy="243" r="46.199999999999996" fill="#2f6fc7" stroke="none"/><circle cx="338" cy="662" r="46.199999999999996" fill="#2f6fc7" stroke="none"/><path d="M400 378 H575" stroke-width="30.799999999999997"/><path d="M580 405 C625 405, 640 440, 660 490 C680 545, 700 580, 755 575" stroke-width="50.4"/><path d="M780 418 C720 430, 625 515, 565 580" stroke-width="30.799999999999997"/><circle cx="772" cy="420" r="33.599999999999994" fill="#2f6fc7" stroke="none"/><circle cx="565" cy="578" r="33.599999999999994" fill="#2f6fc7" stroke="none"/></svg>
<div class="t" style="left:1017px;top:594px;font-size:15.8px;font-weight:bold;color:#262626">VLOOKUP</div>
<div style="left:993px;top:622px;width:255px;height:139px;overflow:hidden"><div class="desc" style="position:absolute;left:4px;top:-1px;width:250px;font-size:11.14px;line-height:16px;color:#262626">Looks for a value in the leftmost column of a<br>table, and then returns a value in the same row<br>from a column you specify. By default, the table<br>must be sorted in an ascending order.</div><div style="position:absolute;left:4px;top:76px;font-size:12.5px;font-weight:bold;color:#262626;white-space:nowrap">Syntax</div><div style="position:absolute;left:4px;top:98px;font-size:10.95px;line-height:14px;color:#262626;white-space:nowrap">VLOOKUP(<b>lookup_value,table_array,col_index_</b><br><b>num,range_lookup</b>)</div><div style="position:absolute;left:4px;top:136px;font-size:11.2px;line-height:14px;color:#262626;white-space:nowrap"><b>Lookup_value</b> is the value to be found in the</div></div>
<div style="left:1248px;top:622px;width:13px;height:139px;background:#f7f7f7;border-left:1px solid #e6e6e6"></div>
<div style="left:1251px;top:626px;width:8px;height:42px;border-radius:4px;background:#c1c1c1"></div>
<div class="t" style="left:1104px;top:771px;font-size:12.9px;color:#1e7145;text-decoration:underline">More help on this function</div>

<!-- SHEET TABS -->
<div style="left:56px;top:777px;width:917px;height:26px;background:#ececec;border-top:1px solid #d3d3d3"></div>
<svg style="left:69px;top:784px" width="8" height="12" viewBox="0 0 8 12" fill="#b5b5b5"><path d="M7 1 V11 L1 6 Z"/></svg>
<svg style="left:93px;top:784px" width="8" height="12" viewBox="0 0 8 12" fill="#b5b5b5"><path d="M1 1 V11 L7 6 Z"/></svg>
<div style="left:117px;top:776px;width:78px;height:24px;background:#fff;border:1px solid #cfcfcf;border-top:none;border-radius:0 0 3px 3px;box-shadow:0 1px 1px rgba(0,0,0,.15)"></div>
<div class="t" style="left:136.5px;top:783px;font-size:11.7px;font-weight:bold;color:#238a4e">Sheet1</div>
<svg style="left:208px;top:783px" width="13" height="13" viewBox="0 0 13 13" stroke="#444" stroke-width="1.5"><path d="M6.5 1 V12 M1 6.5 H12"/></svg>
<div style="left:233px;top:779px;width:1px;height:20px;background:#d0d0d0"></div>

<!-- STATUS -->
<div style="left:56px;top:803px;width:1218px;height:23px;background:linear-gradient(#e4e4e4,#d5d5d5);border-top:1px solid #a9a9a9"></div>
<div class="t" style="left:80.5px;top:808px;font-size:11.7px;color:#555">Edit</div>
<svg style="left:966px;top:807px" width="15" height="15" viewBox="0 0 15 15" fill="none" stroke="#555" stroke-width="1.1"><rect x="1" y="1.5" width="12.5" height="12"/><path d="M1 5.5 H13.5 M1 9.5 H13.5 M5.2 1.5 V13.5 M9.3 1.5 V13.5"/></svg>
<svg style="left:1001px;top:807px" width="16" height="15" viewBox="0 0 16 15" fill="none" stroke="#555" stroke-width="1.1"><rect x="1" y="1.5" width="13.5" height="12"/><rect x="3.5" y="3.5" width="8.5" height="8"/><path d="M5 6 H10.5 M5 8 H10.5 M5 10 H10.5"/></svg>
<svg style="left:1037px;top:807px" width="16" height="15" viewBox="0 0 16 15" fill="none" stroke="#555" stroke-width="1.1"><path d="M1 1.5 H14.5 V13.5 H1 Z M1 8 H8 V1.5 M5 1.5 V8"/></svg>
<div style="left:1071px;top:813.5px;width:8px;height:1.6px;background:#555"></div>
<div style="left:1086px;top:812.5px;width:100px;height:3.5px;border-radius:2px;background:#9c9c9c"></div>
<div style="left:1135px;top:806px;width:16px;height:16px;border-radius:50%;background:#fff;box-shadow:0 0 0 0.5px rgba(0,0,0,.25),0 1px 2px rgba(0,0,0,.25)"></div>
<svg style="left:1192px;top:809px" width="10" height="10" viewBox="0 0 10 10" stroke="#555" stroke-width="1.6"><path d="M5 0.5 V9.5 M0.5 5 H9.5"/></svg>
<div class="t" style="left:1218px;top:809px;font-size:11.9px;color:#444">150%</div>
</div></div>
</body></html>
